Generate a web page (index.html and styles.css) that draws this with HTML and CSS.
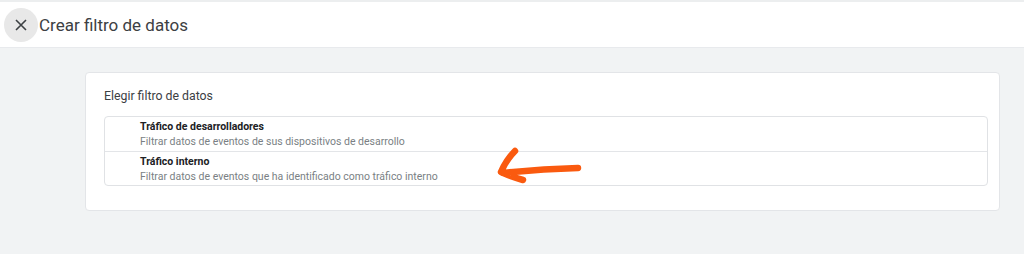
FILE: index.html
```html
<!DOCTYPE html>
<html lang="es">
<head>
<meta charset="utf-8">
<link rel="stylesheet" href="styles.css">
</head>
<body>
<div class="page">
  <header class="header">
    <button class="close" aria-label="Cerrar">
      <svg width="14" height="14" viewBox="0 0 14 14"><path d="M2 2 L12 12 M12 2 L2 12" stroke="#3c4043" stroke-width="1.6" fill="none"/></svg>
    </button>
    <h1 class="title">Crear filtro de datos</h1>
  </header>
  <main class="content">
    <section class="card">
      <h2 class="card-title">Elegir filtro de datos</h2>
      <div class="list">
        <div class="row">
          <div class="row-title">Tráfico de desarrolladores</div>
          <div class="row-sub">Filtrar datos de eventos de sus dispositivos de desarrollo</div>
        </div>
        <div class="row">
          <div class="row-title">Tráfico interno</div>
          <div class="row-sub">Filtrar datos de eventos que ha identificado como tráfico interno</div>
        </div>
      </div>
      <svg class="arrow" width="100" height="45" viewBox="0 0 100 45"><path d="M25 6 Q16 15 11 27 Q22 32 33 35 M13 28 Q50 24 88 23" stroke="#fa5a0f" stroke-width="6.5" stroke-linecap="round" stroke-linejoin="round" fill="none"/></svg>
    </section>
  </main>
</div>
</body>
</html>
```
FILE: styles.css
```css
* { box-sizing: border-box; }
html, body { margin: 0; padding: 0; }
body {
  width: 1024px;
  height: 254px;
  overflow: hidden;
  font-family: Roboto, "Liberation Sans", Arial, sans-serif;
  color: #202124;
  background: #f1f3f4;
}
.page { display: flex; flex-direction: column; height: 254px; }
.header {
  height: 48px;
  background: #fff;
  border-top: 2px solid #eceeef;
  border-bottom: 1px solid #e8eaed;
  display: flex;
  align-items: center;
  padding-left: 4px;
}
.close {
  width: 34px;
  height: 34px;
  border-radius: 50%;
  border: none;
  background: #e8e8e8;
  display: flex;
  align-items: center;
  justify-content: center;
  padding: 0;
}
.title {
  margin: 0 0 0 1px;
  font-size: 17px;
  font-weight: 400;
  color: #3c4043;
}
.content {
  flex: 1;
  padding: 24px 24px 0 85px;
}
.card {
  position: relative;
  width: 915px;
  height: 139px;
  background: #fff;
  border: 1px solid #e3e5e8;
  border-radius: 4px;
  padding: 15px 11px 0 18px;
}
.card-title {
  margin: 0 0 12px 0;
  font-size: 12.3px;
  font-weight: 400;
  color: #3c4043;
  line-height: 16px;
}
.list {
  border: 1px solid #e0e2e5;
  border-radius: 4px;
}
.row {
  padding: 2px 0 0 35px;
  height: 34px;
}
.row + .row { border-top: 1px solid #e3e5e8; }
.row-title {
  font-size: 10.5px;
  font-weight: 700;
  color: #202124;
  line-height: 15px;
}
.row-sub {
  font-size: 10.5px;
  color: #7a7f84;
  line-height: 15px;
}
.arrow {
  position: absolute;
  left: 404px;
  top: 72px;
}
```
